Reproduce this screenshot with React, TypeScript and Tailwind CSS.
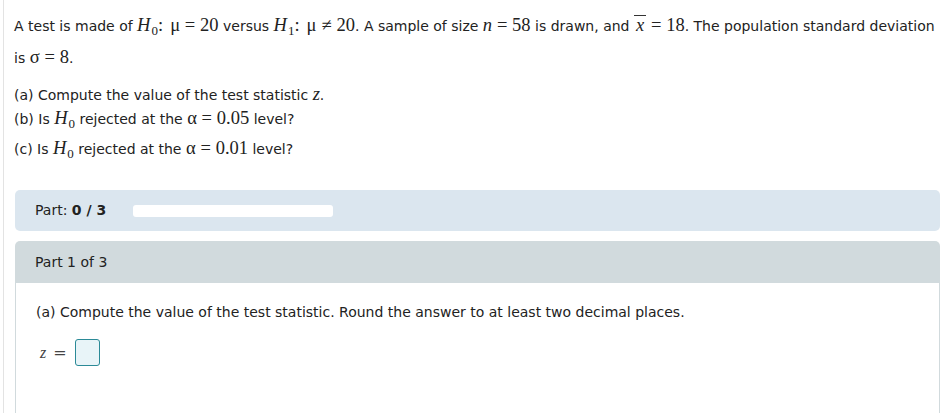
import React from 'react'

const serif = "font-['Liberation_Serif','Times_New_Roman',serif]"

function M({ children }: { children: React.ReactNode }) {
  return <span className={`${serif} text-[18.5px] leading-none`}>{children}</span>
}

// relation with MathJax-like thick spacing
function R({ c }: { c: string }) {
  return <span className="inline-block w-[20px] text-center">{c}</span>
}

function H({ n }: { n: string }) {
  return (
    <span className={`${serif} text-[18.5px] leading-none`}>
      <i>H</i>
      <span className="text-[13px] align-[-4px] ml-[1px]">{n}</span>
    </span>
  )
}

export default function App() {
  return (
    <div className="w-[946px] h-[413px] overflow-hidden bg-white font-['DejaVu_Sans',Verdana,sans-serif] text-[14px] text-[#222]">
      <div className="ml-[3px] h-full border-l border-[#e3e3e3] pl-[10px] pr-[6px] pt-[10px]">
        <p className="leading-[32px]">
          A test is made of <H n="0" />
          <M>
            :<span className="ml-[7px]">μ</span>
            <R c="=" />
            20
          </M>{' '}
          versus <H n="1" />
          <M>
            :<span className="ml-[7px]">μ</span>
            <R c="≠" />
            20
          </M>
          . A sample of size{' '}
          <M>
            <i>n</i>
            <R c="=" />
            58
          </M>{' '}
          is drawn, and{' '}
          <M>
            <span className="inline-block border-t border-[#333] leading-[18px] px-[2px]">
              <i>x</i>
            </span>
            <R c="=" />
            18
          </M>
          . The population standard deviation is{' '}
          <M>
            σ<R c="=" />8
          </M>
          .
        </p>

        <div className="mt-[9px]">
          <div className="h-[24px] leading-[24px]">
            (a) Compute the value of the test statistic <M><i>z</i></M>.
          </div>
          <div className="h-[28px] leading-[24px]">
            (b) Is <H n="0" /> rejected at the{' '}
            <M>
              α<R c="=" />
              0.05
            </M>{' '}
            level?
          </div>
          <div className="h-[28px] leading-[28px]">
            (c) Is <H n="0" /> rejected at the{' '}
            <M>
              α<R c="=" />
              0.01
            </M>{' '}
            level?
          </div>
        </div>

        <div className="mt-[27px] ml-px h-[41px] rounded-[5px] bg-[#dbe6ef] flex items-center pl-[20px]">
          <span>
            Part: <b>0 / 3</b>
          </span>
          <div className="ml-[27px] w-[200px] h-[12px] rounded-[3px] bg-white" />
        </div>

        <div className="mt-[10px] ml-px">
          <div className="h-[42px] rounded-t-[5px] bg-[#d1dadd] flex items-center pl-[20px]">
            Part 1 of 3
          </div>
          <div className="h-[140px] border-x border-[#d1dadd] pl-[20px] pt-[19px]">
            <div>(a) Compute the value of the test statistic. Round the answer to at least two decimal places.</div>
            <div className="mt-[16px] flex items-center pl-[4px]">
              <span className={`${serif} text-[16px] text-[#444]`}>
                <i>z</i>
              </span>
              <span className="ml-[7px] text-[16px] text-[#444]">=</span>
              <div className="ml-[8px] w-[25px] h-[27px] rounded-[3px] border border-[#2b8a97] bg-[#e8f4f8]" />
            </div>
          </div>
        </div>
      </div>
    </div>
  )
}
